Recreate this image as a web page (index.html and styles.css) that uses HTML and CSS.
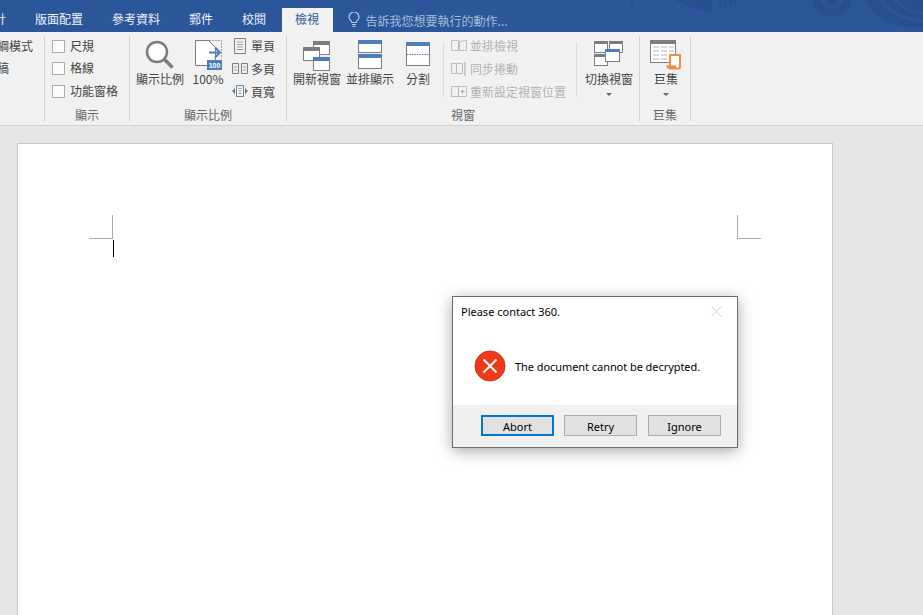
FILE: index.html
```html
<!DOCTYPE html>
<html lang="zh-Hant">
<head>
    <meta charset="UTF-8" />
    <title>Word</title>
    <link rel="stylesheet" href="styles.css">
</head>
<body>
    <div class="tabbar">
        <svg class="tabart" width="923" height="32" viewBox="0 0 923 32">
            <rect x="630" y="0" width="4" height="7" fill="#26508e"/>
            <path d="M675 0h8l3 4 1-4h16l9 0v12l-10-1-9-3-10-4z" fill="#26508e"/>
            <path d="M718 0h3v10h-3zM724 0h3v8h-3zM729 0h3v6h-3zM734 0h2v4h-2zM738 0h2v3h-2z" fill="#26508e"/>
            <circle cx="832" cy="-3" r="20" fill="#26508e"/>
            <circle cx="832" cy="-3" r="12" fill="#2b579a"/>
            <circle cx="832" cy="-3" r="7" fill="#26508e"/>
            <path d="M865 0c6 14 20 26 40 27h18V0z" fill="#26508e"/>
            <path d="M878 0c8 10 20 20 45 23v-3C900 17 889 8 884 0zM892 0c8 8 16 12 31 15v-3C910 10 902 6 898 0z" fill="#2b579a"/>
        </svg>
        <div class="tabs">
            <span class="tab">計</span>
            <span class="tab">版面配置</span>
            <span class="tab">參考資料</span>
            <span class="tab">郵件</span>
            <span class="tab">校閱</span>
            <span class="tab tab-active">檢視</span>
            <span class="tell">
                <svg width="12" height="16" viewBox="0 0 12 16" fill="none" stroke="#b9c9e0" stroke-width="1.2">
                    <path d="M3.8 10.5C3.5 8.5 1 7.8 1 5a5 5 0 0 1 10 0c0 2.8-2.500 3.500-2.800 5.500z"/>
                    <path d="M4 12.500h4M4.500 14.500h3"/>
                </svg>
                告訴我您想要執行的動作...
            </span>
        </div>
    </div>

    <div class="ribbon">
        <div class="group group-views">
            <div class="rows">
                <div class="row">大綱模式</div>
                <div class="row">草稿</div>
            </div>
        </div>

        <div class="group group-show">
            <div class="rows">
                <div class="row"><span class="check"></span>尺規</div>
                <div class="row"><span class="check"></span>格線</div>
                <div class="row"><span class="check"></span>功能窗格</div>
            </div>
            <div class="group-label">顯示</div>
        </div>

        <div class="group group-zoom">
            <div class="controls">
                <div class="big">
                    <svg class="big-icon" width="30" height="32" viewBox="0 0 30 32" fill="none">
                        <circle cx="12" cy="12" r="10" stroke="#7d7d7d" stroke-width="2.500" fill="#fff"/>
                        <path d="M19.500 19.500l8 8" stroke="#7d7d7d" stroke-width="3.500"/>
                    </svg>
                    <span>顯示比例</span>
                </div>
                <div class="big big-pct">
                    <svg class="big-icon" width="28" height="32" viewBox="0 0 28 32" fill="none">
                        <path d="M.5 .5h13l7 7v18H.5z" fill="#fff" stroke="#7d7d7d"/>
                        <path d="M14 .5h12.500v18" stroke="#9a9a9a" stroke-dasharray="2 1"/>
                        <path d="M14 12.500h11M20 7.500l5 5-5 5" stroke="#4a7fba" stroke-width="2"/>
                        <rect x="12" y="20" width="15" height="10" fill="#4a7fba"/>
                        <text x="19.500" y="28" class="pct-text">100</text>
                    </svg>
                    <span>100%</span>
                </div>
                <div class="rows rows-small">
                    <div class="row">
                        <svg width="16" height="16" viewBox="0 0 16 16" fill="none" stroke="#7d7d7d"><path d="M2.500 .5h11v15h-11z"/><path d="M5 4h6M5 6.500h6M5 9h6M5 11.500h6" stroke="#a0a0a0"/></svg>
                        單頁
                    </div>
                    <div class="row">
                        <svg width="16" height="16" viewBox="0 0 16 16" fill="none" stroke="#7d7d7d"><path d="M.5 2.500h6v10h-6zM9.500 2.500h6v10h-6z"/><path d="M2 6h3M2 9h3M11 6h3M11 9h3" stroke="#a0a0a0"/></svg>
                        多頁
                    </div>
                    <div class="row">
                        <svg width="16" height="16" viewBox="0 0 16 16" fill="none" stroke="#7d7d7d"><path d="M4.500 2.500h7v11h-7z"/><path d="M6.500 5.500h3M6.500 8h3M6.500 10.500h3" stroke="#a0a0a0"/><path d="M3 5v6L0 8zM13 5v6l3-3z" fill="#4a7fba" stroke="none"/></svg>
                        頁寬
                    </div>
                </div>
            </div>
            <div class="group-label">顯示比例</div>
        </div>

        <div class="group group-window">
            <div class="controls">
                <div class="big">
                    <svg class="big-icon" width="28" height="32" viewBox="0 0 28 32" fill="none">
                        <rect x="10.500" y="1.500" width="16" height="13" fill="#fff" stroke="#7d7d7d"/>
                        <rect x="10" y="1" width="17" height="4" fill="#7d7d7d"/>
                        <rect x=".5" y="7.500" width="16" height="13" fill="#fff" stroke="#7d7d7d"/>
                        <rect x="0" y="7" width="17" height="4" fill="#7d7d7d"/>
                        <rect x="10.500" y="17.500" width="16" height="13" fill="#fff" stroke="#7d7d7d"/>
                        <rect x="10" y="17" width="17" height="4" fill="#4a7fba"/>
                    </svg>
                    <span>開新視窗</span>
                </div>
                <div class="big big-tile">
                    <svg class="big-icon" width="24" height="32" viewBox="0 0 24 32" fill="none">
                        <rect x=".5" y=".5" width="23" height="12" fill="#fff" stroke="#7d7d7d"/>
                        <rect x="0" y="0" width="24" height="4" fill="#4a7fba"/>
                        <rect x=".5" y="14.500" width="23" height="14" fill="#fff" stroke="#7d7d7d"/>
                        <rect x="0" y="14" width="24" height="4" fill="#4a7fba"/>
                    </svg>
                    <span>並排顯示</span>
                </div>
                <div class="big big-split">
                    <svg class="big-icon" width="24" height="32" viewBox="0 0 24 32" fill="none">
                        <rect x=".5" y="2.500" width="23" height="23" fill="#fff" stroke="#7d7d7d"/>
                        <rect x="0" y="2" width="24" height="4" fill="#4a7fba"/>
                        <path d="M1 14.500h22" stroke="#4a7fba" stroke-dasharray="1.500 1"/>
                    </svg>
                    <span>分割</span>
                </div>
                <span class="vsep vsep-left"></span>
                <div class="rows rows-small rows-off">
                    <div class="row">
                        <svg width="16" height="16" viewBox="0 0 16 16" fill="none" stroke="#bdbdbd"><path d="M.5 2.500h7v10h-7zM8.500 3.500l7-1v10h-7z"/></svg>
                        並排檢視
                    </div>
                    <div class="row">
                        <svg width="16" height="16" viewBox="0 0 16 16" fill="none" stroke="#bdbdbd"><path d="M.5 2.500h5v10h-5zM5.500 2.500h6v10h-6z"/><path d="M14 1v14" stroke="#a8a8a8"/></svg>
                        同步捲動
                    </div>
                    <div class="row">
                        <svg width="16" height="16" viewBox="0 0 16 16" fill="none" stroke="#bdbdbd"><path d="M.5 3.500h7v10h-7zM7.500 3.500h8v10h-8z"/><path d="M9.500 8.500h4M11.500 6.500v4" stroke="#a8a8a8"/></svg>
                        重新設定視窗位置
                    </div>
                </div>
                <span class="vsep"></span>
                <div class="big big-switch">
                    <svg class="big-icon" width="30" height="32" viewBox="0 0 30 32" fill="none">
                        <rect x=".5" y="1.500" width="13" height="11" fill="#fff" stroke="#7d7d7d"/>
                        <rect x="0" y="1" width="14" height="3" fill="#7d7d7d"/>
                        <rect x="15.500" y="1.500" width="13" height="11" fill="#fff" stroke="#7d7d7d"/>
                        <rect x="15" y="1" width="14" height="3" fill="#7d7d7d"/>
                        <rect x=".5" y="14.500" width="13" height="11" fill="#fff" stroke="#7d7d7d"/>
                        <rect x="0" y="14" width="14" height="3" fill="#7d7d7d"/>
                        <rect x="11.500" y="9.500" width="14" height="12" fill="#fff" stroke="#7d7d7d"/>
                        <rect x="11" y="9" width="15" height="3" fill="#4a7fba"/>
                    </svg>
                    <span>切換視窗</span>
                    <i class="caret"></i>
                </div>
            </div>
            <div class="group-label">視窗</div>
        </div>

        <div class="group group-macro">
            <div class="controls">
                <div class="big">
                    <svg class="big-icon" width="32" height="32" viewBox="0 0 32 32" fill="none">
                        <rect x=".5" y=".5" width="25" height="22" fill="#fff" stroke="#7d7d7d"/>
                        <rect x="0" y="0" width="26" height="4" fill="#7d7d7d"/>
                        <path d="M3 7h6M11 7h6M19 7h5M3 11h6M11 11h6M19 11h5M3 15h6M11 15h6M3 19h6M11 19h6" stroke="#b5b5b5"/>
                        <path d="M20 15h10v12c0 1-1 1.500-2 1.500h-8V16z" fill="#fff" stroke="#ed8d3f" stroke-width="2"/>
                        <path d="M16 25.500h10v3H17z" fill="#ed8d3f"/>
                    </svg>
                    <span>巨集</span>
                    <i class="caret"></i>
                </div>
            </div>
            <div class="group-label">巨集</div>
        </div>
    </div>

    <div class="workspace">
        <div class="page">
            <div class="marks">
                <span class="mark mark-left"></span>
                <span class="mark mark-right"></span>
            </div>
            <div class="cursor"></div>
        </div>
    </div>

    <div class="dialog">
        <div class="dialog-body">
            <div class="dialog-title">
                <span>Please contact 360.</span>
                <svg width="11" height="11" viewBox="0 0 11 11" stroke="#cfcfcf" fill="none"><path d="M.5 .5l10 10M10.500 .5l-10 10"/></svg>
            </div>
            <div class="dialog-msg">
                <svg width="32" height="32" viewBox="0 0 32 32">
                    <circle cx="16" cy="16" r="15" fill="#f03a17" stroke="#c9341a"/>
                    <path d="M9.500 9.500l13 13M22.500 9.500l-13 13" stroke="#fff" stroke-width="2"/>
                </svg>
                <span>The document cannot be decrypted.</span>
            </div>
        </div>
        <div class="dialog-foot">
            <button class="btn btn-default">Abort</button>
            <button class="btn">Retry</button>
            <button class="btn btn-last">Ignore</button>
        </div>
    </div>
</body>
</html>
```

FILE: styles.css
```css
body {
  font-family: "Noto Sans CJK TC", "Noto Sans", sans-serif;
  font-size: 12px;
  margin: 0;
  height: 615px;
  overflow: hidden;
  background-color: #e6e6e6;
  color: #444;
}

.tabbar {
  position: relative;
  height: 32px;
  background-color: #2b579a;
  overflow: hidden;
}

.tabart {
  position: absolute;
  top: 0;
  left: 0;
}

.tabs {
  position: relative;
  display: flex;
  align-items: flex-end;
  height: 32px;
  margin-left: -20.500px;
}

.tab {
  height: 24px;
  line-height: 22px;
  padding: 0 14.5px;
  color: #f0f4fa;
  white-space: nowrap;
}

.tab-active {
  width: 24px;
  padding: 0 13.500px;
  margin-left: 1px;
  background-color: #f1f1f1;
  color: #2b579a;
}

.tell {
  display: flex;
  align-items: center;
  gap: 6px;
  height: 24px;
  margin-left: 15px;
  color: #a9bedb;
  white-space: nowrap;
}

.ribbon {
  display: flex;
  height: 93px;
  background-color: #f1f1f1;
  border-bottom: 1px solid #d2d2d2;
  overflow: hidden;
}

.group {
  position: relative;
  display: flex;
  flex-direction: column;
  flex-shrink: 0;
  height: 85px;
  margin-top: 4px;
  border-right: 1px solid #d2d2d2;
}

.group-views {
  width: 44px;
}

.group-show {
  width: 85px;
  padding-left: 7px;
  box-sizing: border-box;
}

.group-zoom {
  width: 156px;
}

.group-window {
  width: 352px;
}

.group-macro {
  width: 50px;
}

.group-label {
  position: absolute;
  left: 0;
  right: 0;
  bottom: 0;
  height: 12px;
  line-height: 12px;
  text-align: center;
  color: #666;
}

.group-views .rows {
  margin-left: -15px;
}

.rows {
  display: flex;
  flex-direction: column;
  gap: 4.500px;
}

.row {
  display: flex;
  align-items: center;
  height: 18px;
  white-space: nowrap;
}

.check {
  width: 11px;
  height: 11px;
  margin: 2px 5px 0 0;
  background-color: #fbfbfb;
  border: 1px solid #ababab;
}

.controls {
  display: flex;
  height: 64px;
}

.big {
  display: flex;
  flex-direction: column;
  align-items: center;
  width: 48px;
  margin-left: 6px;
  padding-top: 4px;
  line-height: 12px;
  white-space: nowrap;
}

.big-icon {
  margin-bottom: 1px;
}

.big-pct {
  width: 32px;
  margin-left: 8px;
}

.big-pct .big-icon {
  margin-left: 1px;
}

.big-tile {
  margin-left: 5px;
}

.big-split {
  width: 24px;
  margin-left: 12px;
}

.big-switch {
  margin-left: 8px;
}

.group-macro .big {
  margin-left: 2px;
}

.caret {
  width: 0;
  height: 0;
  margin-top: 8px;
  border-left: 3px solid transparent;
  border-right: 3px solid transparent;
  border-top: 3px solid #666;
}

.rows-small {
  gap: 5px;
  padding-top: 1px;
  margin-left: 8px;
}

.rows-small svg {
  margin-right: 3px;
}

.vsep {
  flex-shrink: 0;
  width: 1px;
  height: 55px;
  margin-top: 6px;
  background-color: #dcdcdc;
}

.vsep-left {
  margin-left: 13px;
}

.rows-off {
  width: 125px;
  margin-left: 7px;
  color: #b1b1b1;
}

.pct-text {
  font-family: "Liberation Sans", sans-serif;
  font-size: 7px;
  font-weight: bold;
  fill: #fff;
  text-anchor: middle;
}

.workspace {
  padding: 17px 0 0 17px;
}

.page {
  width: 814px;
  height: 471px;
  background-color: #fff;
  border: 1px solid #c6c6c6;
  border-bottom: none;
}

.marks {
  display: flex;
  justify-content: space-between;
  padding: 71px 71px 0;
}

.mark {
  width: 23px;
  height: 23px;
  border-bottom: 1px solid #ababab;
}

.mark-left {
  border-right: 1px solid #ababab;
}

.mark-right {
  border-left: 1px solid #ababab;
}

.cursor {
  width: 1px;
  height: 17px;
  margin: 1px 0 0 95px;
  background-color: #000;
}

.dialog {
  position: absolute;
  top: 296px;
  left: 452px;
  width: 284px;
  height: 150px;
  display: flex;
  flex-direction: column;
  background-color: #fff;
  border: 1px solid #6d6d6d;
  box-shadow: 0 3px 14px rgba(0, 0, 0, 0.35);
  font-family: "Noto Sans", sans-serif;
  color: #000;
}

.dialog-body {
  flex: 1;
}

.dialog-title {
  display: flex;
  justify-content: space-between;
  align-items: center;
  height: 17px;
  padding: 6px 15px 0 8px;
  font-size: 11px;
}

.dialog-msg {
  display: flex;
  align-items: center;
  gap: 9px;
  margin: 30px 0 0 21px;
  font-size: 11px;
  letter-spacing: -0.06px;
}

.dialog-foot {
  display: flex;
  justify-content: flex-end;
  gap: 10px;
  height: 42px;
  padding: 10px 16px 0 0;
  box-sizing: border-box;
  background-color: #f0f0f0;
}

.btn {
  width: 73px;
  height: 21px;
  padding: 2px 0 0;
  background-color: #e1e1e1;
  border: 1px solid #adadad;
  font-family: "Noto Sans", sans-serif;
  font-size: 11px;
  color: #000;
}

.btn-default {
  border: 2px solid #0078d7;
}

.btn-last {
  margin-left: 1px;
}
```
